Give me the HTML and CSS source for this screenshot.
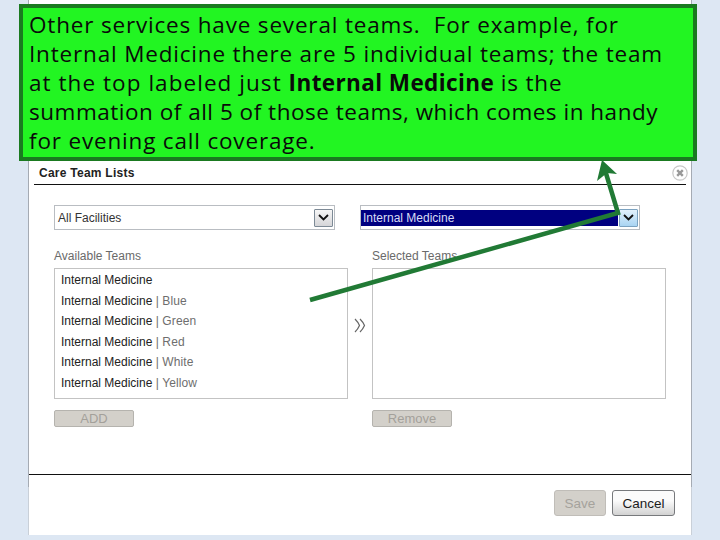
FILE: index.html
```html
<!DOCTYPE html>
<html lang="en">
<head>
<meta charset="utf-8">
<title>Care Team Lists</title>
<link rel="stylesheet" href="styles.css">
</head>
<body>
<main class="dialog">
  <header class="dialog-head">
    <h1 class="dialog-title">Care Team Lists</h1>
    <span class="close">
      <svg width="16" height="16" viewBox="0 0 16 16"><circle cx="8" cy="8" r="7.2" fill="#fff" stroke="#c8c8c8" stroke-width="1.2"/><path d="M5.2 5.2l5.6 5.6M10.800 5.200l-5.600 5.600" stroke="#999" stroke-width="2.400"/></svg>
    </span>
  </header>
  <div class="selects">
    <div class="select">
      <span class="select-value">All Facilities</span>
      <span class="select-btn"><svg width="11" height="7" viewBox="0 0 11 7"><path d="M1 1l4.500 4.500L10 1" fill="none" stroke="#111" stroke-width="1.800"/></svg></span>
    </div>
    <div class="select select-active">
      <span class="select-value">Internal Medicine</span>
      <span class="select-btn"><svg width="11" height="7" viewBox="0 0 11 7"><path d="M1 1l4.500 4.500L10 1" fill="none" stroke="#111" stroke-width="1.800"/></svg></span>
    </div>
  </div>
  <div class="columns">
    <section class="col">
      <div class="col-label">Available Teams</div>
      <ul class="list">
        <li>Internal Medicine</li>
        <li>Internal Medicine <span class="sub">| Blue</span></li>
        <li>Internal Medicine <span class="sub">| Green</span></li>
        <li>Internal Medicine <span class="sub">| Red</span></li>
        <li>Internal Medicine <span class="sub">| White</span></li>
        <li>Internal Medicine <span class="sub">| Yellow</span></li>
      </ul>
      <button class="btn-small">ADD</button>
    </section>
    <div class="mover">
      <svg width="12" height="15" viewBox="0 0 12 15"><path d="M1 1Q4 4 5.500 7.500Q4 11 1 14M6 1Q9 4 10.500 7.500Q9 11 6 14" fill="none" stroke="#666" stroke-width="1.200"/></svg>
    </div>
    <section class="col">
      <div class="col-label">Selected Teams</div>
      <ul class="list"></ul>
      <button class="btn-small">Remove</button>
    </section>
  </div>
  <footer class="dialog-foot">
    <button class="btn btn-disabled">Save</button>
    <button class="btn btn-cancel">Cancel</button>
  </footer>
</main>
<aside class="callout">Other services have several teams.&nbsp; For example, for<br>Internal Medicine there are 5 individual teams; the team<br><span class="line-wide">at the top labeled just </span><b>Internal Medicine</b> is the<br><span class="line-tight">summation of all 5 of those teams, which comes in handy</span><br>for evening call coverage.</aside>
<svg class="arrow" width="720" height="540" viewBox="0 0 720 540">
  <path d="M310 300L618 213L605 170" fill="none" stroke="#217a35" stroke-width="4.500"/>
  <path d="M602 160L597 181L607 173L617 174Z" fill="#217a35"/>
</svg>
</body>
</html>
```
FILE: styles.css
```css
* { box-sizing: border-box; }
html, body { margin: 0; height: 540px; overflow: hidden; }
body {
  background: #dde7f3;
  font-family: "Liberation Sans", Arial, sans-serif;
  font-size: 12px;
  color: #222;
}
.dialog {
  margin-left: 28px;
  width: 664px;
  height: 535px;
  background: #fff;
  border-style: solid;
  border-width: 0 1px;
  border-image: linear-gradient(#a5abb3 486px, #c9d0d8 486px) 1;
  padding-top: 160px;
  display: flex;
  flex-direction: column;
}
.dialog-head {
  margin: 0 5px;
  height: 25px;
  border-bottom: 1px solid #111;
  display: flex;
  align-items: center;
  justify-content: space-between;
  padding: 2px 0 0 5px;
}
.dialog-title { margin: 0; font-size: 12px; font-weight: bold; color: #222; letter-spacing: 0.25px; }
.close { display: flex; margin: 0 -2px 0 0; }
.selects {
  display: flex;
  gap: 25px;
  margin: 20px 0 0 25px;
}
.select {
  width: 281px;
  height: 25px;
  border: 1px solid #b9bdc2;
  display: flex;
  align-items: center;
  padding: 0 1px 0 3px;
  justify-content: space-between;
}
.select-active { width: 280px; padding-left: 0; }
.select-value { color: #333; }
.select-active .select-value {
  background: #000080;
  color: #d8dcf5;
  flex: 1;
  height: 16px;
  line-height: 16px;
  padding-left: 2px;
  margin-right: 1px;
}
.select-btn {
  width: 19px;
  height: 18px;
  border: 1px solid #7d8a96;
  border-radius: 1px;
  background: linear-gradient(#f6f6f6, #d5d5d8);
  display: flex;
  align-items: center;
  justify-content: center;
  margin-right: 0;
}
.select-active .select-btn {
  background: linear-gradient(#e2f1fc, #a9d4f2);
  border-color: #7ba2c0;
}
.columns {
  display: flex;
  margin: 18px 0 0 25px;
}
.col { width: 294px; }
.col-label { color: #6a6a6a; height: 14px; line-height: 16px; }
.list {
  list-style: none;
  margin: 6px 0 0;
  padding: 1px 6px 0;
  height: 131px;
  border: 1px solid #c3c3c3;
}
.list li { height: 20.600px; line-height: 20px; color: #222; }
.sub { color: #6e6e6e; letter-spacing: 0.1px; }
.btn-small {
  display: block;
  margin-top: 11px;
  width: 80px;
  height: 17px;
  padding: 0;
  font: 13px "Liberation Sans", Arial, sans-serif;
  line-height: 15px;
  color: #a3a09a;
  background: #d3d0ca;
  border: 1px solid #b5b3ae;
  border-radius: 2px;
}
.mover {
  width: 24px;
  display: flex;
  justify-content: center;
  align-items: flex-start;
  padding-top: 70px;
}
.dialog-foot {
  margin-top: 47px;
  height: 61px;
  border-top: 1px solid #111;
  display: flex;
  justify-content: flex-end;
  gap: 6px;
  padding: 15px 16px 0 0;
}
.btn {
  height: 26px;
  padding: 0;
  font: 13.500px "Liberation Sans", Arial, sans-serif;
  border-radius: 3px;
}
.btn-disabled {
  width: 52px;
  color: #a5a29c;
  background: #d3d0ca;
  border: 1px solid #c0bdb8;
}
.btn-cancel {
  width: 63px;
  color: #1c1c1c;
  background: linear-gradient(#fbfbfb 40%, #d2d2d2);
  border: 1px solid #77797c;
}
.callout {
  position: absolute;
  left: 19px;
  top: 4px;
  width: 678px;
  height: 157px;
  background: #22f522;
  border: 4px solid #1a7a20;
  padding: 2px 0 0 6px;
  font-family: "Open Sans", sans-serif;
  font-size: 22.500px;
  letter-spacing: 0.82px;
  line-height: 29px;
  color: #0a0a0a;
  white-space: nowrap;
}
.callout b { letter-spacing: 0.4px; }
.line-wide { letter-spacing: 1.05px; }
.line-tight { letter-spacing: 0.51px; }
.arrow { position: absolute; left: 0; top: 0; pointer-events: none; }
```
